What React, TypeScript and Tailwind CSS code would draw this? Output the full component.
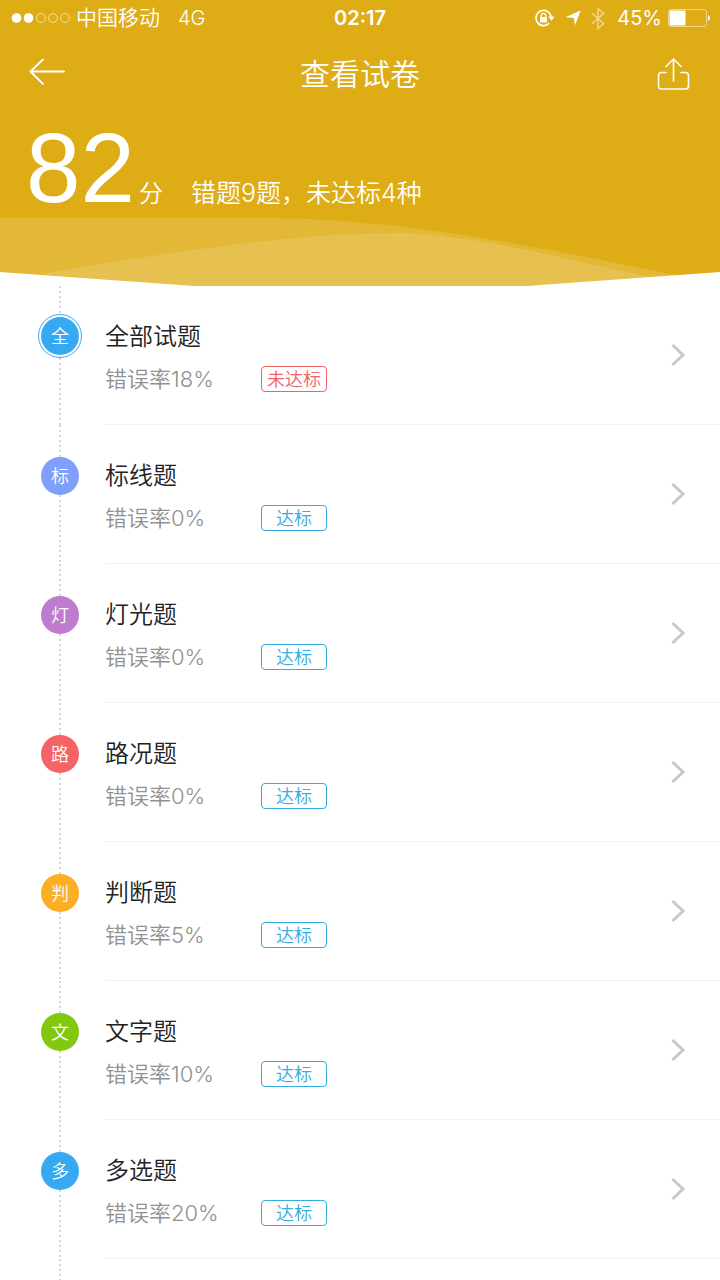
import clsx from 'clsx';

type Category = {
  mark: string;
  title: string;
  rate: number;
  passed: boolean;
  color: string;
};

const categories: Category[] = [
  { mark: '全', title: '全部试题', rate: 18, passed: false, color: 'bg-[#36a9f2]' },
  { mark: '标', title: '标线题', rate: 0, passed: true, color: 'bg-[#7f9ffb]' },
  { mark: '灯', title: '灯光题', rate: 0, passed: true, color: 'bg-[#bf7bce]' },
  { mark: '路', title: '路况题', rate: 0, passed: true, color: 'bg-[#f66364]' },
  { mark: '判', title: '判断题', rate: 5, passed: true, color: 'bg-[#fcae25]' },
  { mark: '文', title: '文字题', rate: 10, passed: true, color: 'bg-[#82c80f]' },
  { mark: '多', title: '多选题', rate: 20, passed: true, color: 'bg-[#36a9f2]' },
];

function StatusBar() {
  return (
    <div className="grid h-9 grid-cols-3 items-center px-2.5 text-xl leading-9">
      <div className="flex items-center">
        <svg width="60" height="10" viewBox="0 0 60 10" fill="none" className="mr-1.5">
          <circle cx="6.500" cy="5" r="4.800" fill="#fff" />
          <circle cx="18.500" cy="5" r="4.800" fill="#fff" />
          {[31, 43, 55].map((cx) => (
            <circle key={cx} cx={cx} cy="5" r="4.400" stroke="#fff" strokeOpacity=".6" strokeWidth="1" />
          ))}
        </svg>
        <span className="text-[21px] whitespace-nowrap">中国移动</span>
        <span className="ml-4.5">4G</span>
      </div>
      <span className="text-center font-semibold">02:17</span>
      <div className="flex items-center justify-end">
        {/* orientation lock */}
        <svg width="21" height="20" viewBox="0 0 21 20" fill="none" stroke="#fff" strokeWidth="1.600" className="mr-2.5">
          <path d="M15.200 15.200A7.600 7.600 0 1 1 17.200 9.200" />
          <path d="M14.300 8.600h6.200l-3.100 4.200z" fill="#fff" stroke="none" />
          <rect x="6" y="9" width="7" height="5.600" rx=".6" fill="#fff" stroke="none" />
          <path d="M7.300 9.200V7.600a2.200 2.200 0 0 1 4.400 0v1.600" strokeWidth="1.300" />
        </svg>
        {/* location arrow */}
        <svg width="16" height="16" viewBox="0 0 16 16" fill="#fff" className="mr-2.5">
          <path d="M15.600.4 10 15.600 8.800 8 .4 7.200z" />
        </svg>
        <svg width="14" height="23" viewBox="0 0 14 23" fill="none" stroke="#fff" strokeOpacity=".5" strokeWidth="1.500" className="mr-3">
          <path d="M1 6.300 12.600 16.600 7 21.500V1.500l5.600 4.900L1 16.700" />
        </svg>
        <span className="mr-1.5 font-normal">45%</span>
        <svg width="42" height="18" viewBox="0 0 42 18" fill="none">
          <rect x=".5" y=".5" width="38" height="17" rx="2.500" stroke="#fff" strokeOpacity=".5" />
          <rect x="1.500" y="1.500" width="16" height="15" rx="1" fill="#fff" />
          <path d="M40 6v6c2.400-1 2.400-5 0-6z" fill="#fff" />
        </svg>
      </div>
    </div>
  );
}

function NavBar() {
  return (
    <div className="flex h-19 items-center justify-between px-7">
      <button type="button" aria-label="返回" className="w-10 pb-1">
        <svg width="38" height="28" viewBox="0 0 38 28" fill="none" stroke="#fff" strokeWidth="1.800" strokeLinecap="round" strokeLinejoin="round">
          <path d="M15 1.500 2.500 13.500 15 26M2.500 13.500H36" />
        </svg>
      </button>
      <h1 className="text-3xl leading-10">查看试卷</h1>
      <button type="button" aria-label="分享" className="flex w-10 justify-end">
        <svg width="36" height="34" viewBox="0 0 36 34" fill="none" stroke="#fff" strokeWidth="1.600" strokeLinecap="round" strokeLinejoin="round">
          <path d="M10 15.500H5.500Q2.500 15.500 2.500 18.500V29q0 3 3 3h24q3 0 3-3V18.500q0-3-3-3H25" />
          <path d="M17.500 24V2M10 9.500 17.500 2 25 9.500" />
        </svg>
      </button>
    </div>
  );
}

function Waves() {
  return (
    <svg viewBox="0 0 720 68" preserveAspectRatio="none" className="block h-17 w-full" aria-hidden="true">
      <path d="M0 0H270C405 2 520 25 690 60L600 68H0Z" fill="#fff" fillOpacity=".15" />
      <path d="M40 56C170 34 300 14 405 15C495 20 560 41 655 60L560 68H190Z" fill="#fff" fillOpacity=".13" />
      <path d="M0 54 194 68H0ZM720 54 527 68H720Z" fill="#fff" />
    </svg>
  );
}

function Dots({ className }: { className: string }) {
  return (
    <span
      className={clsx(
        'block w-0.5 bg-[linear-gradient(#d6d6d6_2px,transparent_2px)] bg-[length:2px_5px]',
        className,
      )}
    />
  );
}

function CategoryRow({ item, active }: { item: Category; active: boolean }) {
  return (
    <li>
      <a href={`#${item.title}`} className="flex">
        <span className="ml-9 flex w-12 shrink-0 flex-col items-center">
          <Dots className={active ? 'h-7' : 'h-8'} />
          <span className={clsx('rounded-full', active && 'border border-[#36a9f2] p-0.5')}>
            <span className={clsx('flex size-[38px] items-center justify-center rounded-full pt-0.5 text-lg leading-none text-white', item.color)}>
              {item.mark}
            </span>
          </span>
          <Dots className="flex-1" />
        </span>
        <span className="ml-[21px] flex h-[139px] flex-1 items-center justify-between border-b border-[#f3f3f3] pr-8">
          <span className="flex flex-col gap-1.5 pt-1.5">
            <span className="text-2xl leading-9 text-[#222]">{item.title}</span>
            <span className="flex items-center text-[#919191]">
              <span className="w-39 text-[22px] leading-9">错误率{item.rate}%</span>
              <span
                className={clsx(
                  'flex h-[26px] w-[66px] items-center justify-center rounded border pt-0.5 text-lg leading-none whitespace-nowrap',
                  item.passed ? 'border-[#36ade0] text-[#36ade0]' : 'border-[#f06466] text-[#f06466]',
                )}
              >
                {item.passed ? '达标' : '未达标'}
              </span>
            </span>
          </span>
          <svg width="20" height="24" viewBox="0 0 20 24" fill="none" stroke="#c7c7cc" strokeWidth="3">
            <path d="M4.500 2 15 12 4.500 22" />
          </svg>
        </span>
      </a>
    </li>
  );
}

export default function App() {
  return (
    <div className="flex min-h-screen flex-col bg-white font-['Inter','Noto_Sans_CJK_SC',sans-serif] font-[350]">
      <header className="bg-[#deac15] text-white">
        <StatusBar />
        <NavBar />
        <div className="flex h-[106px] items-baseline px-6.5">
          <span className="font-['Liberation_Sans',sans-serif] text-[98px] leading-28 font-normal">82</span>
          <span className="ml-1 text-2xl">分</span>
          <p className="ml-7 text-[25px]">错题9题，未达标4种</p>
        </div>
        <Waves />
      </header>
      <main className="flex flex-1 flex-col">
        <ul>
          {categories.map((item, i) => (
            <CategoryRow key={item.title} item={item} active={i === 0} />
          ))}
        </ul>
        <div className="ml-9 flex w-12 flex-1 justify-center">
          <Dots className="h-auto" />
        </div>
      </main>
    </div>
  );
}
